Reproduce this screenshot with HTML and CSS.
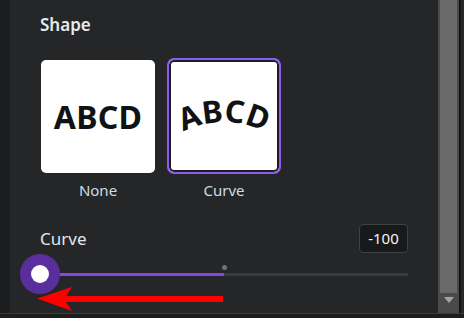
FILE: index.html
```html
<!DOCTYPE html>
<html>
<head>
<meta charset="utf-8">
<link rel="stylesheet" href="styles.css">
</head>
<body>
<div class="frame">
  <div class="main">
    <div class="rail"></div>
    <div class="panel">
      <h2 class="heading">Shape</h2>
      <div class="options">
        <div class="option">
          <div class="card card-plain"><span class="abcd">ABCD</span></div>
          <div class="label">None</div>
        </div>
        <div class="option">
          <div class="card card-selected">
            <svg class="curve-svg" viewBox="0 0 106 108" width="106" height="108">
              <path id="arc" d="M 2 76 A 90 90 0 0 1 104 76" fill="none"/>
              <text class="curve-text"><textPath href="#arc" startOffset="50%" text-anchor="middle">ABCD</textPath></text>
            </svg>
          </div>
          <div class="label label-sel">Curve</div>
        </div>
      </div>
      <div class="value-row">
        <span class="value-label">Curve</span>
        <span class="value-box">-100</span>
      </div>
      <div class="slider">
        <div class="track">
          <div class="fill" style="width:50%"></div>
          <div class="rest"></div>
        </div>
        <div class="tick"></div>
        <div class="thumb"><div class="thumb-core"></div></div>
      </div>
    </div>
    <div class="scrollbar">
      <div class="sb-thumb"></div>
      <div class="sb-arrow"></div>
    </div>
    <div class="edge"></div>
  </div>
  <div class="bottom"></div>
  <svg class="annot" width="464" height="318" viewBox="0 0 464 318">
    <polygon points="37,298.5 72,287 66,296 223,296 223,302 66,302 72,311" fill="#ff0000"/>
  </svg>
</div>
</body>
</html>
```

FILE: styles.css
```css
* { box-sizing: border-box; }
html, body {
  margin: 0;
  padding: 0;
  width: 464px;
  height: 318px;
  overflow: hidden;
  background: #252627;
  font-family: "Noto Sans", "Open Sans", sans-serif;
}
.frame {
  position: relative;
  width: 464px;
  height: 318px;
  display: flex;
  flex-direction: column;
}
.main {
  display: flex;
  height: 313px;
}
.rail {
  width: 10px;
  background: #1c1d1e;
}
.panel {
  width: 428px;
  padding: 13px 30px 0 30px;
  background: #252628;
}
.heading {
  margin: 0;
  font-size: 17px;
  line-height: 24px;
  font-weight: 600;
  color: #e6e9ee;
}
.options {
  display: flex;
  gap: 12px;
  margin-top: 21px;
  padding-left: 1px;
}
.option {
  width: 114px;
  display: flex;
  flex-direction: column;
  align-items: center;
}
.card {
  width: 114px;
  background: #ffffff;
  display: flex;
  align-items: center;
  justify-content: center;
}
.card-plain {
  height: 113px;
  margin-top: 2px;
  margin-bottom: 1px;
  border-radius: 5px;
}
.card-selected {
  height: 116px;
  border: 2px solid #8c5cf2;
  border-radius: 7px;
  box-shadow: inset 0 0 0 2px #1c1d1f;
  overflow: hidden;
}
.abcd {
  font-size: 32px;
  line-height: 1;
  font-weight: 700;
  color: #111214;
  letter-spacing: 0.3px;
}
.curve-svg {
  display: block;
}
.curve-text {
  font-family: "Noto Sans", sans-serif;
  font-size: 31px;
  font-weight: 700;
  fill: #111214;
}
.label {
  margin-top: 6px;
  font-size: 15px;
  line-height: 20px;
  color: #d2dbe4;
}
.value-row {
  display: flex;
  justify-content: space-between;
  align-items: center;
  margin-top: 24px;
  height: 29px;
}
.value-label {
  font-size: 17px;
  line-height: 24px;
  color: #e3e7ec;
}
.value-box {
  width: 49px;
  height: 29px;
  border: 1px solid #404143;
  border-radius: 4px;
  background: #18191a;
  color: #f2f4f7;
  font-size: 15px;
  line-height: 27px;
  text-align: center;
}
.slider {
  position: relative;
  height: 41px;
}
.track {
  display: flex;
  padding-top: 20px;
}
.fill {
  height: 3px;
  background: #8247ea;
}
.rest {
  flex: 1;
  height: 3px;
  background: #3b3b3d;
}
.tick {
  position: absolute;
  left: calc(50% - 2.5px);
  top: 12px;
  width: 5px;
  height: 5px;
  border-radius: 50%;
  background: #707174;
}
.thumb {
  position: absolute;
  left: -20px;
  top: 1px;
  width: 40px;
  height: 40px;
  border-radius: 50%;
  background: #5a2e9d;
  display: flex;
  align-items: center;
  justify-content: center;
}
.thumb-core {
  width: 18px;
  height: 18px;
  border-radius: 50%;
  background: #ffffff;
}
.scrollbar {
  width: 21px;
  background: #4a4a4a;
  display: flex;
  flex-direction: column;
  align-items: center;
}
.sb-thumb {
  width: 17px;
  height: 293px;
  background: #6a6a6a;
}
.sb-arrow {
  margin-top: 4px;
  width: 0;
  height: 0;
  border-left: 5px solid transparent;
  border-right: 5px solid transparent;
  border-top: 6px solid #a3a3a3;
}
.edge {
  width: 5px;
  background: #26282b;
  border-left: 2px solid #111314;
}
.bottom {
  height: 5px;
  background: #1f1d1b;
  border-top: 1px solid #3c3a38;
}
.annot {
  position: absolute;
  left: 0;
  top: 0;
  pointer-events: none;
}
```
